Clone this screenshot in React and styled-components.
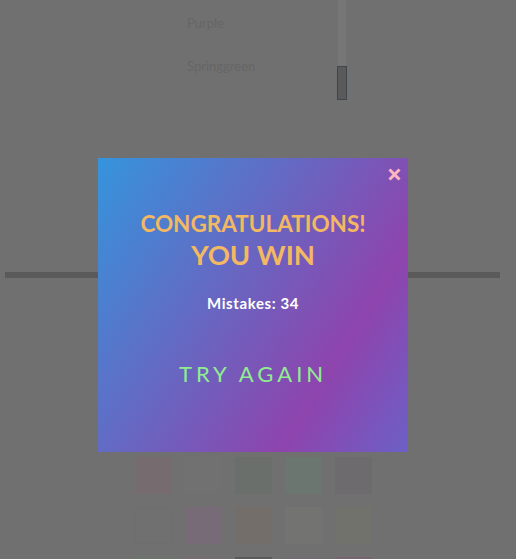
import React from "react";
import styled, { createGlobalStyle } from "styled-components";

const GlobalStyle = createGlobalStyle`
  html, body {
    margin: 0;
    padding: 0;
    background: #e0e0e0;
    font-family: "Lato", "Open Sans", sans-serif;
    overflow: hidden;
  }
`;

const Page = styled.div`
  width: 516px;
  height: 559px;
  overflow: hidden;
`;

const TopRow = styled.div`
  display: flex;
  height: 272px;
  padding-left: 187px;
  box-sizing: border-box;
`;

const NameList = styled.ul`
  list-style: none;
  margin: 2px 0 0;
  padding: 0;
  width: 151px;
`;

const NameItem = styled.li`
  height: 43px;
  line-height: 43px;
  font-size: 13px;
  color: #cccccc;
`;

const Track = styled.div`
  position: relative;
  width: 8px;
  height: 100px;
  background: #ececec;
`;

const Thumb = styled.div`
  position: absolute;
  left: -1px;
  bottom: 0;
  width: 8px;
  height: 32px;
  background: #b4b4b4;
  border: 1px solid #7e8ca0;
`;

const Divider = styled.hr`
  margin: 0 0 0 5px;
  width: 495px;
  height: 6px;
  border: none;
  background: #b4b4b4;
`;

const Grid = styled.div`
  display: grid;
  grid-template-columns: repeat(5, 37px);
  gap: 13px;
  margin: 179px 0 0 135px;
`;

const Swatch = styled.div`
  width: 37px;
  height: 37px;
  box-sizing: border-box;
  background: ${(p) => p.color};
  border: 1px solid ${(p) => p.edge || p.color};
`;

const Overlay = styled.div`
  position: fixed;
  inset: 0;
  background: rgba(0, 0, 0, 0.5);
  display: flex;
  align-items: flex-start;
  padding: 158px 0 0 98px;
`;

const Modal = styled.div`
  position: relative;
  width: 310px;
  height: 294px;
  box-sizing: border-box;
  padding-top: 52px;
  display: flex;
  flex-direction: column;
  align-items: center;
  background: linear-gradient(122deg, #3594dc 0%, #8e44ad 74%, #6c60c6 100%);
  font-family: "Lato", "Open Sans", sans-serif;
`;

const CloseButton = styled.button`
  position: absolute;
  top: 8px;
  right: 6px;
  width: 16px;
  height: 16px;
  padding: 0;
  border: none;
  background: none;
  cursor: pointer;
  display: flex;
  align-items: center;
  justify-content: center;
`;

const Title = styled.h2`
  margin: 0;
  text-align: center;
  color: #f3b862;
  font-weight: 700;
  font-size: ${(p) => p.size}px;
  line-height: ${(p) => p.lh}px;
`;

const Mistakes = styled.p`
  margin: 21px 0 0;
  color: #ffffff;
  font-weight: 700;
  font-size: 15px;
  line-height: 20px;
  letter-spacing: 0.6px;
`;

const RetryButton = styled.button`
  margin-top: 46px;
  padding: 0;
  border: none;
  background: none;
  color: #90ee90;
  font-family: inherit;
  font-size: 22px;
  line-height: 30px;
  letter-spacing: 4px;
  cursor: pointer;
`;

const swatches = [
  ["#ecd8de"], ["#e2e2e2"], ["#d6dfd6"], ["#d4ecdf"], ["#ddd6df"],
  ["#e0e0e0", "#dcdcdc"], ["#ecd6ec"], ["#e8ddd6"], ["#e6e7e3"], ["#e3e5d6"],
  ["#d6ead6"], ["#ecd8e2"], ["#b4b4b4"], ["#e8d6ec"], ["#ecc8de"],
];

export default function App() {
  return (
    <>
      <GlobalStyle />
      <Page>
        <TopRow>
          <NameList>
            <NameItem>Purple</NameItem>
            <NameItem>Springgreen</NameItem>
          </NameList>
          <Track>
            <Thumb />
          </Track>
        </TopRow>
        <Divider />
        <Grid>
          {swatches.map(([c, e], i) => (
            <Swatch key={i} color={c} edge={e} />
          ))}
        </Grid>
      </Page>
      <Overlay>
        <Modal>
          <CloseButton aria-label="Close">
            <svg width="13" height="13" viewBox="0 0 13 13">
              <path d="M1.5 1.5 L11.5 11.5 M11.5 1.5 L1.5 11.5" stroke="#ffb6c1" strokeWidth="3" />
            </svg>
          </CloseButton>
          <Title size={22.5} lh={28}>CONGRATULATIONS!</Title>
          <Title size={27.5} lh={34}>YOU WIN</Title>
          <Mistakes>Mistakes: 34</Mistakes>
          <RetryButton>TRY AGAIN</RetryButton>
        </Modal>
      </Overlay>
    </>
  );
}
